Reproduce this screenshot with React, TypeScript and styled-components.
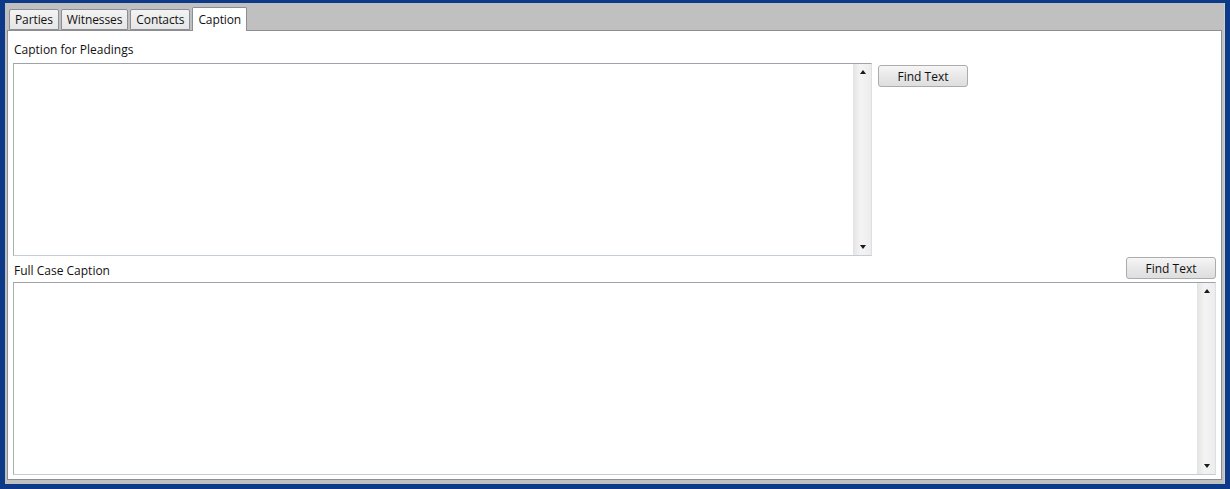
import { FC } from 'react'
import styled, { createGlobalStyle } from 'styled-components'

const GlobalStyle = createGlobalStyle`
  html, body {
    margin: 0;
    padding: 0;
    width: 1230px;
    height: 489px;
    overflow: hidden;
    font-family: 'Open Sans', 'Noto Sans', 'Liberation Sans', sans-serif;
    font-size: 12px;
    color: #111111;
  }
`

const tabs = ['Parties', 'Witnesses', 'Contacts', 'Caption']

const Frame = styled.div`
  box-sizing: border-box;
  width: 1230px;
  height: 489px;
  background: #0c3a88;
  padding: 3px 5px 5px 5px;
  display: flex;
`
const Inner = styled.div`
  flex: 1;
  display: flex;
  flex-direction: column;
  background: #c0c0c0;
  border-right: 1px solid #cfcfcf;
  padding: 0 2px 4px 2px;
`
const TabStrip = styled.div`
  height: 27px;
  display: flex;
  align-items: flex-end;
  gap: 2px;
  padding-left: 2px;
  position: relative;
  z-index: 1;
`
const Tab = styled.div<{ $active?: boolean }>`
  box-sizing: border-box;
  height: ${(p) => (p.$active ? '24px' : '21px')};
  margin-bottom: ${(p) => (p.$active ? '-1px' : '0')};
  padding: 0 5px;
  display: flex;
  align-items: center;
  border: 1px solid #8c8e94;
  border-bottom: ${(p) => (p.$active ? 'none' : '1px solid #8c8e94')};
  border-radius: 2px 2px 0 0;
  background: ${(p) => (p.$active ? '#ffffff' : 'linear-gradient(#f3f3f3, #e6e6e6)')};
  font-size: 12px;
  line-height: 14px;
  letter-spacing: -0.1px;
`
const Panel = styled.div`
  flex: 1;
  display: flex;
  flex-direction: column;
  background: #ffffff;
  border: 1px solid #8c8e94;
  padding: 0 5px 4px 5px;
`
const Label = styled.div`
  padding: 11px 0 5px 1px;
  line-height: 16px;
`
const TopRow = styled.div`
  display: flex;
  align-items: flex-start;
  gap: 6px;
`
const HeaderRow = styled.div`
  display: flex;
  align-items: flex-end;
  justify-content: space-between;
  padding: 1px 0 3px 1px;
  line-height: 16px;
`
const TextBox = styled.div<{ $width?: number; $height: number }>`
  box-sizing: border-box;
  width: ${(p) => (p.$width ? `${p.$width}px` : 'auto')};
  flex: ${(p) => (p.$width ? '0 0 auto' : '1')};
  height: ${(p) => p.$height}px;
  display: flex;
  justify-content: flex-end;
  border: 1px solid #abadb3;
  border-top-color: #9ea3ab;
  border-right-color: #dbdfe6;
  border-bottom-color: #c6ccd3;
  background: #ffffff;
`
const ScrollBar = styled.div`
  width: 17px;
  display: flex;
  flex-direction: column;
  justify-content: space-between;
  align-items: center;
  background: linear-gradient(90deg, #e6e6e6, #f4f4f4 40%, #ececec);
  border-left: 1px solid #e2e2e2;
`
const Arrow = styled.div<{ $down?: boolean }>`
  margin: ${(p) => (p.$down ? '0 0 6px 0' : '6px 0 0 0')};
  width: 0;
  height: 0;
  border-left: 3.5px solid transparent;
  border-right: 3.5px solid transparent;
  ${(p) => (p.$down ? 'border-top: 4px solid #1a1a1a;' : 'border-bottom: 4px solid #1a1a1a;')}
`
const Button = styled.button<{ $offset?: number }>`
  box-sizing: border-box;
  width: 90px;
  height: 22px;
  margin-top: ${(p) => p.$offset ?? 0}px;
  padding: 0;
  border: 1px solid #acacac;
  border-radius: 3px;
  background: linear-gradient(#f6f6f6, #e8e8e8 50%, #dedede);
  font-family: inherit;
  font-size: 12px;
  color: #111111;
  cursor: pointer;
`

const ScrollBox: FC<{ width?: number; height: number }> = ({ width, height }) => (
  <TextBox $width={width} $height={height}>
    <ScrollBar>
      <Arrow />
      <Arrow $down />
    </ScrollBar>
  </TextBox>
)

const App: FC = () => (
  <>
    <GlobalStyle />
    <Frame>
      <Inner>
        <TabStrip>
          {tabs.map((t) => (
            <Tab key={t} $active={t === 'Caption'}>
              {t}
            </Tab>
          ))}
        </TabStrip>
        <Panel>
          <Label>Caption for Pleadings</Label>
          <TopRow>
            <ScrollBox width={859} height={193} />
            <Button $offset={2}>Find Text</Button>
          </TopRow>
          <HeaderRow>
            <span>Full Case Caption</span>
            <Button>Find Text</Button>
          </HeaderRow>
          <ScrollBox height={192} />
        </Panel>
      </Inner>
    </Frame>
  </>
)

export default App
